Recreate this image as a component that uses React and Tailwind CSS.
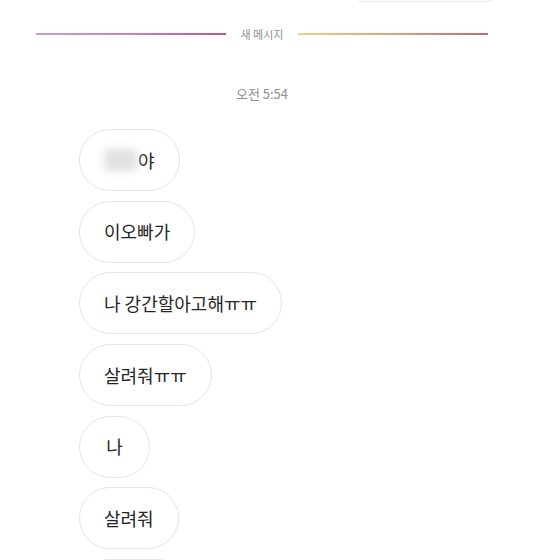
const messages = [
  { id: 1, text: '야', hidden: true },
  { id: 2, text: '이오빠가' },
  { id: 3, text: '나 강간할아고해ㅠㅠ' },
  { id: 4, text: '살려줘ㅠㅠ' },
  { id: 5, text: '나' },
  { id: 6, text: '살려줘' },
  { id: 7, text: '' },
]

export default function App() {
  return (
    <div
      className="relative h-[560px] w-[560px] overflow-hidden bg-white"
      style={{ fontFamily: '"Noto Sans CJK KR", "Noto Sans", sans-serif' }}
    >
      {/* previous sent bubble, cut off at top */}
      <div className="absolute left-[345px] top-[-40px] h-[42px] w-[160px] rounded-[21px] border border-[#ececec] bg-white" />

      <div className="w-[452px] ml-[36px] pt-[27px]">
        {/* new messages divider */}
        <div className="flex items-center h-[14px]">
          <div className="h-[2px] w-[190px] bg-gradient-to-r from-[#b9a0d8] via-[#d27fb5] to-[#b85a7a]" />
          <div className="flex-1 text-center text-[11px] leading-none text-[#8e8e8e]">새 메시지</div>
          <div className="h-[2px] w-[190px] bg-gradient-to-r from-[#efcf8a] via-[#e0a07a] to-[#b87070]" />
        </div>

        {/* timestamp */}
        <div className="mt-[46px] text-center text-[13px] leading-[14px] text-[#8e8e8e]">오전 5:54</div>

        {/* messages */}
        <div className="mt-[28px] ml-[43px] flex flex-col items-start gap-[9.7px]">
          {messages.map(m => (
            <div
              key={m.id}
              className="flex h-[62px] min-w-[71px] items-center justify-center rounded-full border border-[#e4e4e4] px-6 text-[18px] text-[#262626]"
            >
              {m.hidden && (
                <span className="mr-[1px] inline-block h-[22px] w-[33px] rounded-md bg-[#e0e0e0] blur-[4px]" />
              )}
              {m.text || <span className="w-[60px]" />}
            </div>
          ))}
        </div>
      </div>
    </div>
  )
}
